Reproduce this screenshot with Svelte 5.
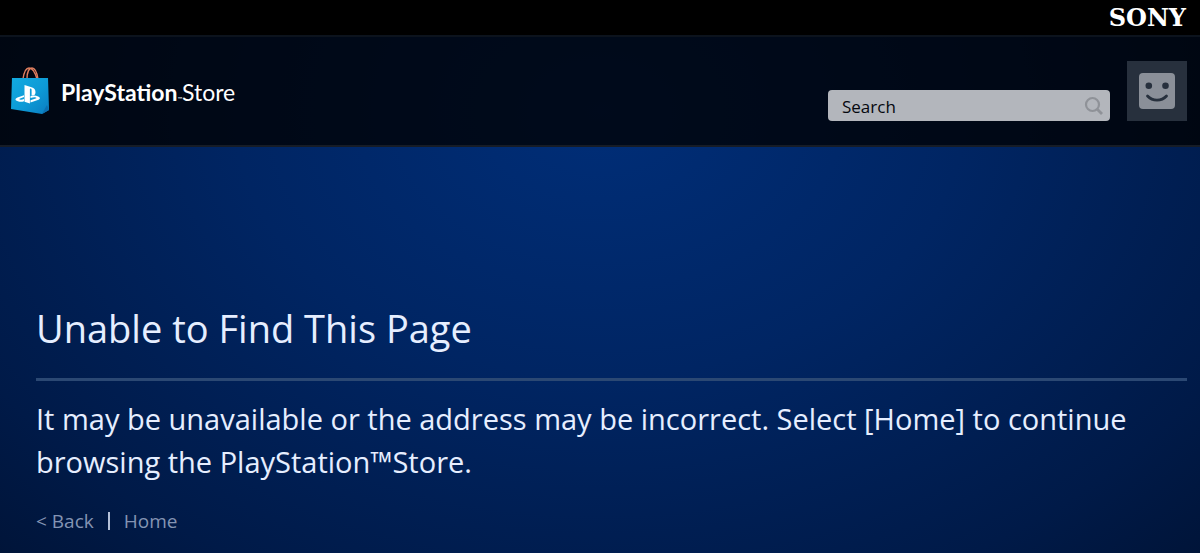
<script>
  let query = $state('')
</script>

<div class="page">
  <div class="sony-bar">
    <a class="sony" href="#sony">SONY</a>
  </div>

  <header class="header">
    <a class="brand" href="#store">
      <svg class="bag" viewBox="0 0 38 48" aria-hidden="true">
        <defs>
          <linearGradient id="bag-fill" x1="0" y1="0" x2="1" y2="1">
            <stop offset="0" stop-color="#12abe0" />
            <stop offset="0.55" stop-color="#0d9ad6" />
            <stop offset="1" stop-color="#0a7cc0" />
          </linearGradient>
        </defs>
        <g fill="none" stroke="#e07f5f" stroke-width="1.4">
          <path d="M12 12C13 5 15 1 18 1s6 4 8 11" />
          <path d="M16 12C16 5 18 1 21 1s5 5 6 11" />
        </g>
        <path d="M1 11h36l1 32-7 4L0 42z" fill="url(#bag-fill)" />
        <path d="M31 47l7-4-2-5z" fill="#0b6fb0" />
        <path
          d="M13.500 18l7 2.200c2.800.9 4 2.400 4 5 0 2.700-1.600 3.800-3.900 2.700v-5c0-.8-.2-1.300-.8-1.500-.6-.1-.9.2-.9.900v14.200l-5.400-1.700z"
          fill="#fff"
        />
        <path
          d="M13 28.200L6.500 30.500c-2.700 1-2.700 2.900.3 3.700 2.200.7 4.200.7 6.200 0v-2.100c-1.500.6-3 .8-4.200.4-.8-.3-.6-.8.300-1.100L13 30zM19.500 29c2.900-.7 5.500-.4 7.700.4 2.600 1.100 2.100 2.700-.4 3.500l-7.300 2.600v-2.200l5.200-1.800c1-.4 1-.9 0-1.100-1.200-.4-2.700-.2-5.200.6z"
          fill="#fff"
        />
      </svg>
      <span class="wordmark"><b>PlayStation</b><small>™</small>Store</span>
    </a>

    <div class="tools">
      <form class="search" role="search" onsubmit={(e) => e.preventDefault()}>
        <input type="text" placeholder="Search" aria-label="Search" bind:value={query} />
        <button class="go" aria-label="Submit search">
          <svg viewBox="0 0 20 20" aria-hidden="true">
            <circle cx="8.500" cy="8.500" r="6.500" fill="none" stroke="#8f9298" stroke-width="2.200" />
            <path d="M13 13l5 5" stroke="#8f9298" stroke-width="2.800" />
          </svg>
        </button>
      </form>
      <button class="avatar" aria-label="Account">
        <svg viewBox="0 0 36 36" aria-hidden="true">
          <rect width="36" height="36" rx="4" fill="#8a8f98" />
          <circle cx="9.800" cy="12.800" r="3.300" fill="#27303d" />
          <circle cx="26.500" cy="12.800" r="3.300" fill="#27303d" />
          <path d="M8.500 23c5 5.500 14 5.500 19 0" fill="none" stroke="#27303d" stroke-width="2.800" stroke-linecap="round" />
        </svg>
      </button>
    </div>
  </header>

  <main class="content">
    <h1>Unable to Find This Page</h1>
    <p>It may be unavailable or the address may be incorrect. Select [Home] to continue browsing the PlayStation™Store.</p>
    <nav class="links">
      <a href="#back">&lt; Back</a>
      <span class="divider"></span>
      <a href="#home">Home</a>
    </nav>
  </main>
</div>

<style>
  :global(body) {
    margin: 0;
    background: #001231;
  }
  .page {
    min-height: 100vh;
    box-sizing: border-box;
    background: radial-gradient(ellipse 76% 120% at 50% 20%, #002e78 0%, #002563 40%, #001a48 78%, #001233 100%);
    color: #e6eeff;
    font-family: 'Open Sans', 'Noto Sans', sans-serif;
  }
  a {
    color: inherit;
    text-decoration: none;
  }
  button {
    border: 0;
    padding: 0;
    cursor: pointer;
  }
  svg {
    display: block;
  }
  .sony-bar {
    height: 35px;
    display: flex;
    align-items: center;
    justify-content: flex-end;
    padding: 0 14px;
    background: #000;
  }
  .sony {
    color: #fff;
    font: bold 24px/35px 'DejaVu Serif', serif;
  }
  .header {
    height: 108px;
    display: flex;
    justify-content: space-between;
    align-items: center;
    padding: 0 13px 0 11px;
    border-top: 2px solid #0c131d;
    border-bottom: 2px solid #161c26;
    box-sizing: content-box;
    background: rgba(0, 0, 0, .77);
    background-clip: padding-box;
  }
  .brand {
    display: flex;
    align-items: center;
    gap: 12px;
  }
  .bag {
    width: 38px;
    height: 48px;
  }
  .wordmark {
    padding-top: 8px;
    color: #fff;
    font: 23px/32px Lato, sans-serif;
  }
  .wordmark b {
    font-weight: 700;
  }
  .wordmark small {
    font-size: 6px;
  }
  .tools {
    display: flex;
    align-items: flex-end;
    gap: 17px;
  }
  .search {
    width: 282px;
    height: 31px;
    display: flex;
    align-items: center;
    box-sizing: border-box;
    padding: 0 6px 0 14px;
    border-radius: 4px;
    background: #b3b6bc;
  }
  .search input {
    flex: 1;
    min-width: 0;
    padding: 3px 0 0;
    border: 0;
    outline: 0;
    background: none;
    color: #05080e;
    font: 17px/24px 'Open Sans', sans-serif;
  }
  .search input::placeholder {
    color: #05080e;
    opacity: 1;
  }
  .go {
    background: none;
  }
  .go svg {
    width: 20px;
    height: 20px;
  }
  .avatar {
    width: 60px;
    height: 60px;
    display: grid;
    place-items: center;
    background: #27303d;
  }
  .avatar svg {
    width: 36px;
    height: 36px;
  }
  .content {
    padding: 151px 13px 16px 36px;
  }
  h1 {
    margin: 0;
    padding-bottom: 20px;
    border-bottom: 3px solid #2b4873;
    font-size: 38px;
    line-height: 60px;
    font-weight: 400;
  }
  p {
    margin: 16px 0 0;
    font-size: 29px;
    line-height: 43px;
  }
  .links {
    display: flex;
    align-items: center;
    gap: 14px;
    margin-top: 26px;
    color: #8494b3;
    font-size: 19px;
    line-height: 24px;
  }
  .divider {
    width: 2px;
    height: 18px;
    background: #b4c0d8;
  }
</style>
